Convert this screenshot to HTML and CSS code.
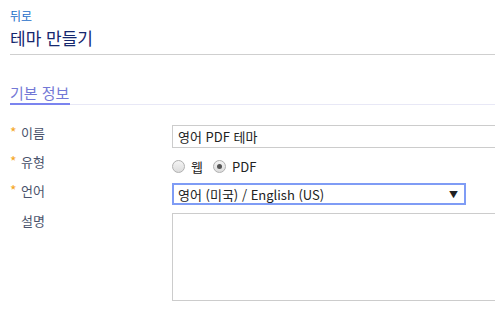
FILE: index.html
```html
<!DOCTYPE html>
<html lang="ko">
<head>
    <meta charset="UTF-8">
    <title>테마 만들기</title>
    <link rel="stylesheet" href="styles.css">
</head>
<body>
    <div class="header">
        <a class="back" href="#">뒤로</a>
        <h1 class="title">테마 만들기</h1>
    </div>
    <div class="tabs">
        <span class="tab active">기본 정보</span>
    </div>
    <div class="form">
        <div class="row">
            <label class="label"><span class="req">*</span>이름</label>
            <input class="field" type="text" value="영어 PDF 테마">
        </div>
        <div class="row">
            <label class="label"><span class="req">*</span>유형</label>
            <div class="radios">
                <label class="radio"><span class="dot"></span>웹</label>
                <label class="radio"><span class="dot checked"></span>PDF</label>
            </div>
        </div>
        <div class="row">
            <label class="label"><span class="req">*</span>언어</label>
            <div class="select">
                <span>영어 (미국) / English (US)</span>
                <span class="arrow">▼</span>
            </div>
        </div>
        <div class="row">
            <label class="label"><span class="req"></span>설명</label>
            <div class="textarea"></div>
        </div>
    </div>
</body>
</html>
```

FILE: styles.css
```css
body {
    margin: 0;
    font-family: "Noto Sans CJK KR", "Noto Sans", sans-serif;
    background: #fff;
    overflow: hidden;
}
.header {
    margin-left: 10px;
    padding-top: 8px;
    height: 46px;
    border-bottom: 1px solid #cfcfcf;
}
.back {
    display: block;
    font-size: 12px;
    line-height: 16px;
    color: #1d6ec9;
    text-decoration: none;
}
.title {
    margin: 4px 0 0;
    font-size: 17px;
    line-height: 20px;
    font-weight: normal;
    color: #15276e;
}
.tabs {
    display: flex;
    margin: 28px 0 0 10px;
    border-bottom: 1px solid #e8e8f6;
}
.tab {
    font-size: 15px;
    line-height: 20px;
    color: #7378d6;
    padding-right: 1px;
    border-bottom: 2px solid #7b84ef;
    margin-bottom: -1px;
}
.form {
    padding: 20px 0 0 10px;
}
.row {
    display: grid;
    grid-template-columns: 162px 1fr;
    align-items: start;
    margin-bottom: 6px;
}
.label {
    display: flex;
    font-size: 13px;
    line-height: 14px;
    color: #4a536c;
    padding-top: 1px;
}
.req {
    width: 11px;
    color: #f5a623;
    font-size: 14px;
    line-height: 12px;
}
.field {
    box-sizing: border-box;
    width: 340px;
    height: 23px;
    border: 1px solid #cccccc;
    padding: 0 5px;
    font-family: inherit;
    font-size: 13px;
    color: #222;
    outline: none;
}
.radios {
    display: flex;
    gap: 10px;
    height: 23px;
    padding-top: 2px;
    box-sizing: border-box;
    align-items: center;
}
.radio {
    display: flex;
    align-items: center;
    gap: 6px;
    font-size: 13px;
    color: #222;
}
.dot {
    box-sizing: border-box;
    width: 13px;
    height: 13px;
    border-radius: 50%;
    border: 1px solid #b0b0b0;
    background: linear-gradient(#f4f4f4, #dcdcdc);
    position: relative;
}
.dot.checked::after {
    content: "";
    position: absolute;
    left: 3px;
    top: 3px;
    width: 5px;
    height: 5px;
    border-radius: 50%;
    background: #555;
}
.select {
    box-sizing: border-box;
    width: 294px;
    height: 22px;
    margin-bottom: 2px;
    border: 2px solid #7f9cf5;
    display: flex;
    justify-content: space-between;
    align-items: center;
    padding: 0 6px 0 4px;
    font-size: 13px;
    color: #222;
}
.arrow {
    font-size: 9px;
}
.textarea {
    box-sizing: border-box;
    width: 340px;
    height: 88px;
    border: 1px solid #cccccc;
}
```
